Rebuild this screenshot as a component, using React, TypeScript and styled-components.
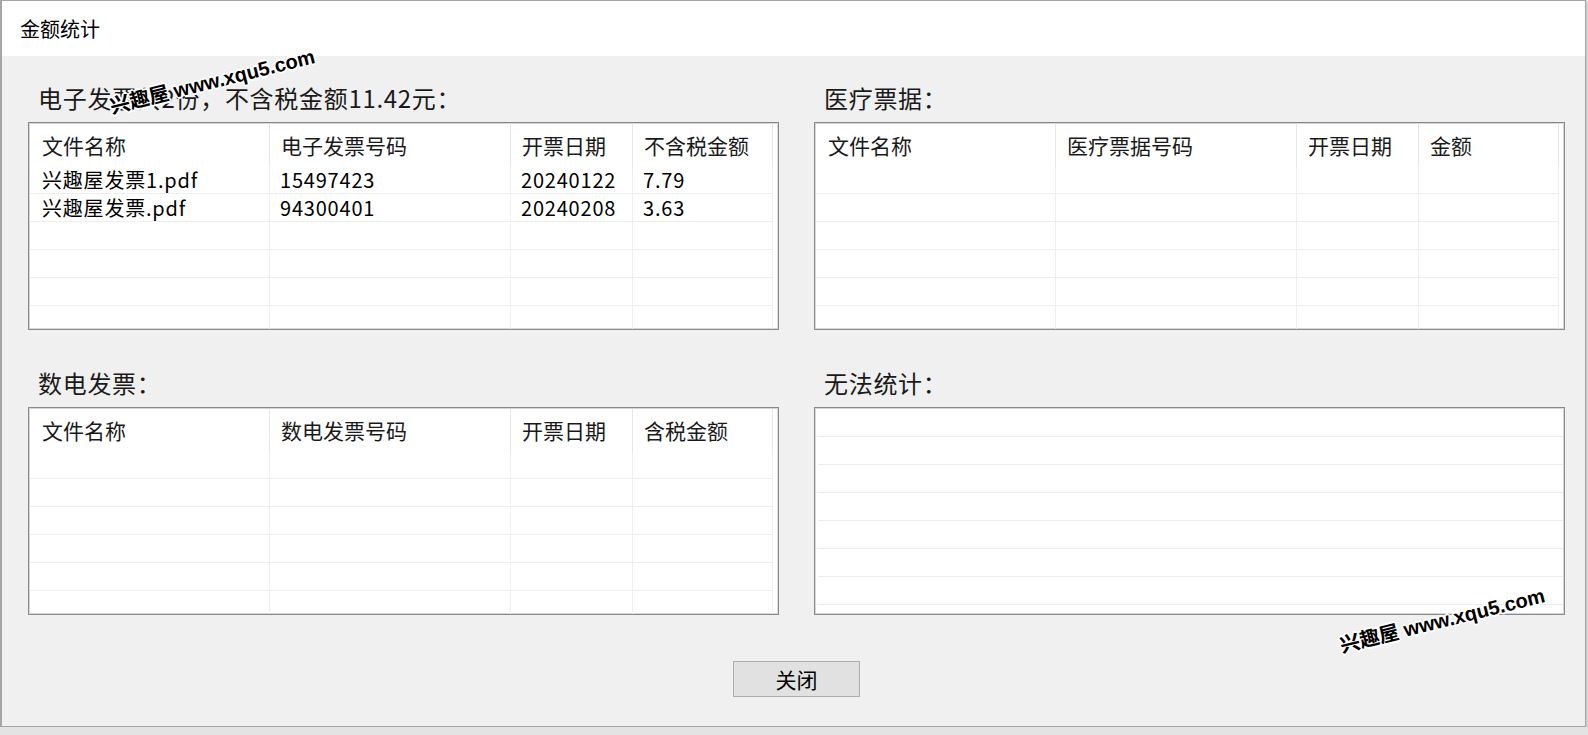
import React from 'react'
import styled, { createGlobalStyle } from 'styled-components'

const GlobalStyle = createGlobalStyle`
    html, body {
        margin: 0;
        padding: 0;
        background: #e3e3e3;
    }
    body {
        font-family: "Noto Sans CJK SC", "Liberation Sans", sans-serif;
        color: #000;
    }
`

const CJK = `"Noto Sans CJK SC", "Liberation Sans", sans-serif`

const COLUMNS = '240px 241px 122px 140px 1fr'

const Window = styled.div`
    position: relative;
    box-sizing: border-box;
    width: 1586px;
    height: 727px;
    display: flex;
    flex-direction: column;
    background: #f0f0f0;
    border: 1px solid #a6a6a6;
    border-left-width: 2px;
    box-shadow: 1px 1px 4px rgba(0, 0, 0, 0.18);
    overflow: hidden;
`

const TitleBar = styled.div`
    height: 55px;
    flex: none;
    display: flex;
    align-items: center;
    padding-left: 18px;
    background: #fff;
    font-family: ${ CJK };
    font-size: 20px;
    color: #000;
`

const Content = styled.div`
    display: grid;
    grid-template-columns: 751px 751px;
    column-gap: 35px;
    row-gap: 39px;
    padding: 28px 0 0 26px;
`

const Section = styled.section`
    display: flex;
    flex-direction: column;
`

const Label = styled.div`
    height: 28px;
    line-height: 28px;
    margin-bottom: 10px;
    padding-left: 10px;
    font-family: ${ CJK };
    font-size: 24px;
    letter-spacing: 0.7px;
    color: #1a1a1a;
    white-space: nowrap;
`

const ListBox = styled.div`
    box-sizing: border-box;
    height: 208px;
    padding: 1px;
    background: #fff;
    border: 1px solid #8a8a8a;
    box-shadow: inset 0 0 0 1px #d6d6d6;
    overflow: hidden;
`

const Row = styled.div`
    display: grid;
    grid-template-columns: ${ COLUMNS };
`

const HeadCell = styled.div<{ $first?: boolean }>`
    height: 42px;
    box-sizing: border-box;
    padding: 0 0 0 ${ props => props.$first ? 12 : 11 }px;
    display: flex;
    align-items: center;
    border-right: 1px solid #e6e6e6;
    font-family: ${ CJK };
    font-size: 21px;
    color: #1a1a1a;
    white-space: nowrap;
`

const HeadFiller = styled.div`
    height: 42px;
`

const Cell = styled.div<{ $first?: boolean }>`
    height: 28px;
    box-sizing: border-box;
    padding-left: ${ props => props.$first ? 12 : 10 }px;
    display: flex;
    align-items: center;
    border-right: 1px solid #efefef;
    border-bottom: 1px solid #efefef;
    font-family: ${ CJK };
    font-size: 20px;
    letter-spacing: 0.8px;
    color: #000;
    white-space: nowrap;
`

const Filler = styled.div`
    height: 28px;
`

const ListLine = styled.div`
    height: 28px;
    box-sizing: border-box;
    margin-left: 2px;
    border-bottom: 1px solid #ececec;
`

const Footer = styled.div`
    display: flex;
    justify-content: center;
    padding: 46px 0 0 6px;
`

const Button = styled.button`
    width: 127px;
    height: 36px;
    padding: 0;
    background: #e1e1e1;
    border: 1px solid #adadad;
    font-family: ${ CJK };
    font-size: 21px;
    color: #000;
    cursor: default;
`

const Watermark = styled.span<{ $x: number; $y: number }>`
    position: absolute;
    left: ${ props => props.$x }px;
    top: ${ props => props.$y }px;
    transform: translate(-50%, -50%) rotate(-14deg);
    font-family: "Liberation Sans", "Noto Sans CJK SC", sans-serif;
    font-weight: bold;
    font-size: 20px;
    color: #000;
    white-space: nowrap;
    pointer-events: none;
    text-shadow:
        1px 0 0 #fff, -1px 0 0 #fff, 0 1px 0 #fff, 0 -1px 0 #fff,
        1px 1px 0 #fff, -1px -1px 0 #fff, 1px -1px 0 #fff, -1px 1px 0 #fff,
        2px 0 0 #fff, -2px 0 0 #fff, 0 2px 0 #fff, 0 -2px 0 #fff;
`

const BODY_ROWS = 6

interface InvoiceTableProps {
    title: string;
    columns: string[];
    rows: string[][];
}

const InvoiceTable: React.FC<InvoiceTableProps> = (props) => {
    const filled = [ ...props.rows ]
    while (filled.length < BODY_ROWS) filled.push([ '', '', '', '' ])

    return (
        <Section>
            <Label>{ props.title }</Label>
            <ListBox>
                <Row>
                    { props.columns.map((c, i) => <HeadCell key={ c } $first={ i == 0 }>{ c }</HeadCell>) }
                    <HeadFiller />
                </Row>
                { filled.map((r, ri) => (
                    <Row key={ ri }>
                        { r.map((v, ci) => <Cell key={ ci } $first={ ci == 0 }>{ v }</Cell>) }
                        <Filler />
                    </Row>
                )) }
            </ListBox>
        </Section>
    )
}

const PlainList: React.FC<{ title: string }> = (props) => (
    <Section>
        <Label>{ props.title }</Label>
        <ListBox>
            { Array.from({ length: 7 }).map((_, i) => <ListLine key={ i } />) }
        </ListBox>
    </Section>
)

export default function App() {
    return (
        <>
            <GlobalStyle />
            <Window>
                <TitleBar>金额统计</TitleBar>
                <Content>
                    <InvoiceTable
                        title='电子发票共2份，不含税金额11.42元：'
                        columns={[ '文件名称', '电子发票号码', '开票日期', '不含税金额' ]}
                        rows={[
                            [ '兴趣屋发票1.pdf', '15497423', '20240122', '7.79' ],
                            [ '兴趣屋发票.pdf', '94300401', '20240208', '3.63' ],
                        ]}
                    />
                    <InvoiceTable
                        title='医疗票据：'
                        columns={[ '文件名称', '医疗票据号码', '开票日期', '金额' ]}
                        rows={[]}
                    />
                    <InvoiceTable
                        title='数电发票：'
                        columns={[ '文件名称', '数电发票号码', '开票日期', '含税金额' ]}
                        rows={[]}
                    />
                    <PlainList title='无法统计：' />
                </Content>
                <Footer>
                    <Button>关闭</Button>
                </Footer>
                <Watermark $x={ 210 } $y={ 79 }>兴趣屋 www.xqu5.com</Watermark>
                <Watermark $x={ 1440 } $y={ 618 }>兴趣屋 www.xqu5.com</Watermark>
            </Window>
        </>
    )
}
